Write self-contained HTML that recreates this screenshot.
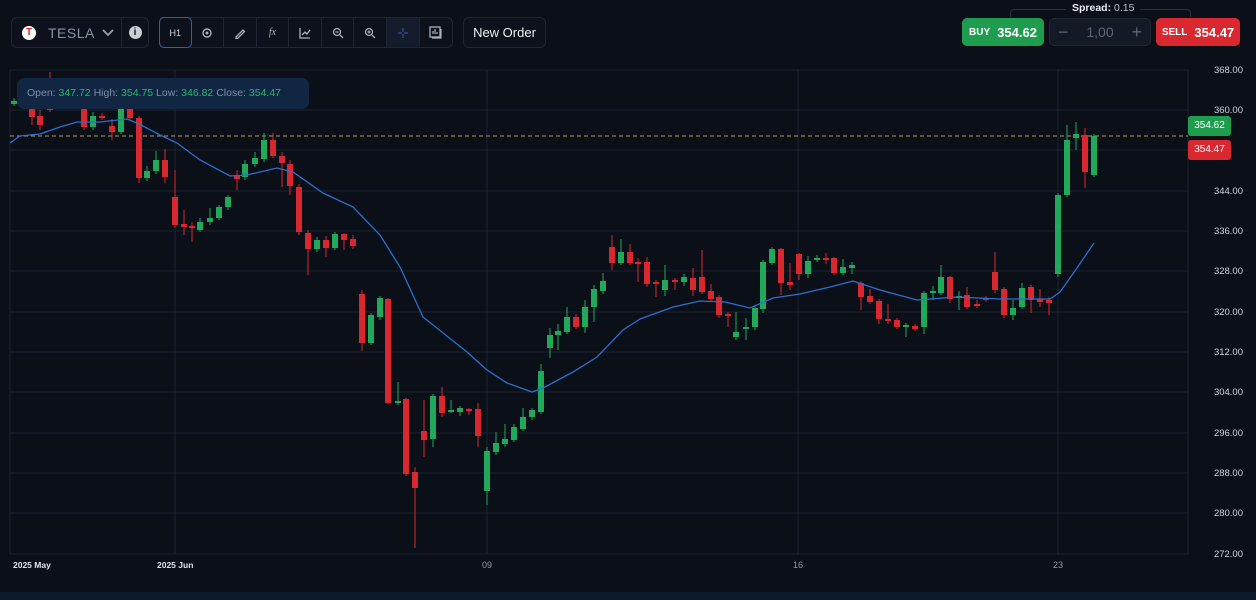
<!DOCTYPE html>
<html><head><meta charset="utf-8">
<style>
*{box-sizing:border-box;margin:0;padding:0}
body{width:1256px;height:600px;background:#0a0f18;font-family:"Liberation Sans",sans-serif;overflow:hidden;position:relative;color:#fff}
.grp{position:absolute;top:17px;height:31px;border:1px solid #1f2633;border-radius:6px;background:#0c111b;display:flex;align-items:center}
.btn{width:33px;height:29px;display:flex;align-items:center;justify-content:center;border-right:1px solid #1f2633}
.btn:last-child{border-right:none}
.lbl{position:absolute;right:13px;font-size:9.5px;color:#cfd5de}
.x{position:absolute;top:560px;font-size:9px;color:#8f98a6}
</style></head><body>

<div class="grp" style="left:11px;width:138px">
  <div style="width:110px;height:29px;display:flex;align-items:center;border-right:1px solid #1f2633">
    <div style="width:14px;height:14px;border-radius:50%;background:#fff;margin-left:10px;display:flex;align-items:center;justify-content:center;color:#e0242b;font-size:10px;font-weight:bold">T</div>
    <span style="margin-left:12px;font-size:14px;color:#8a93a2;letter-spacing:.5px">TESLA</span>
    <svg width="12" height="8" style="margin-left:7px"><path d="M1 1l5 5 5-5" stroke="#9aa2b0" stroke-width="1.8" fill="none"/></svg>
  </div>
  <div style="flex:1;display:flex;justify-content:center"><div style="width:13px;height:13px;border-radius:50%;background:#c9ced6;color:#0c111b;font-size:10px;font-weight:bold;text-align:center;line-height:13px">i</div></div>
</div>

<div class="grp" style="left:159px;width:294px">
  <div class="btn" style="border:1.5px solid #2a5fb8;border-radius:5px;height:31px;margin-left:-1px;font-size:9px;color:#cfd5de">H1</div>
  <div class="btn"><svg width="12" height="12"><circle cx="6" cy="6" r="4" stroke="#aab1bd" stroke-width="1.4" fill="none"/><circle cx="6" cy="6" r="1.5" fill="#aab1bd"/></svg></div>
  <div class="btn"><svg width="12" height="12"><path d="M2 10l7-7 1.5 1.5-7 7H2z" stroke="#aab1bd" stroke-width="1.3" fill="none"/></svg></div>
  <div class="btn" style="font-size:10px;font-style:italic;color:#aab1bd;font-family:'Liberation Serif',serif">fx</div>
  <div class="btn"><svg width="12" height="12"><path d="M1 1v10h10M3 8l3-3 2 2 3-4" stroke="#aab1bd" stroke-width="1.3" fill="none"/></svg></div>
  <div class="btn"><svg width="12" height="12"><circle cx="5" cy="5" r="3.5" stroke="#aab1bd" stroke-width="1.3" fill="none"/><path d="M8 8l3 3M3.5 5h3" stroke="#aab1bd" stroke-width="1.3"/></svg></div>
  <div class="btn"><svg width="12" height="12"><circle cx="5" cy="5" r="3.5" stroke="#aab1bd" stroke-width="1.3" fill="none"/><path d="M8 8l3 3M3.5 5h3M5 3.5v3" stroke="#aab1bd" stroke-width="1.3"/></svg></div>
  <div class="btn" style="background:#141b2b"><svg width="10" height="10"><path d="M5 0v4M5 6v4M0 5h4M6 5h4" stroke="#3c5fa8" stroke-width="1"/></svg></div>
  <div class="btn"><svg width="13" height="13"><rect x="1" y="1" width="10" height="10" stroke="#aab1bd" stroke-width="1.3" fill="none"/><path d="M4 8V5M6 8V3M8 8V6M3 12h9V3" stroke="#aab1bd" stroke-width="1.2" fill="none"/></svg></div>
</div>

<div class="grp" style="left:463px;width:83px;justify-content:center;font-size:13px;color:#eef1f5">New Order</div>

<div style="position:absolute;left:1010px;top:9px;width:181px;height:8px;border:1px solid #2a303c;border-bottom:none;border-radius:4px 4px 0 0"></div>
<div style="position:absolute;left:1066px;top:2px;padding:0 6px;background:#0a0f18;font-size:10.5px;color:#e8ecf1;font-weight:bold">Spread: <span style="font-weight:normal;color:#b8bec8">0.15</span></div>
<div style="position:absolute;left:962px;top:18px;width:82px;height:28px;background:#1f9d4f;border-radius:5px;display:flex;align-items:center;justify-content:center;font-weight:bold;font-size:13px"><span style="font-size:10px;margin-right:7px">BUY</span>354.62</div>
<div style="position:absolute;left:1049px;top:18px;width:102px;height:28px;background:#131925;border:1px solid #1f2633;border-radius:5px;display:flex;align-items:center;justify-content:space-between;padding:0 8px;color:#5d6574;font-size:14px"><span style="font-size:18px">−</span><span>1,00</span><span style="font-size:18px">+</span></div>
<div style="position:absolute;left:1156px;top:18px;width:84px;height:28px;background:#d92830;border-radius:5px;display:flex;align-items:center;justify-content:center;font-weight:bold;font-size:13px"><span style="font-size:10px;margin-right:7px">SELL</span>354.47</div>

<svg id="ch" width="1256" height="600" style="position:absolute;left:0;top:0"></svg>

<div style="position:absolute;left:17px;top:78px;width:292px;height:31px;background:#102643;border-radius:7px;font-size:10.5px;color:#7f8da3;padding:9px 0 0 10px">Open: <span style="color:#27b86a">347.72</span> High: <span style="color:#27b86a">354.75</span> Low: <span style="color:#27b86a">346.82</span> Close: <span style="color:#27b86a">354.47</span></div>

<div class="lbl" style="top:65px">368.00</div><div class="lbl" style="top:105px">360.00</div>
<div class="lbl" style="top:186px">344.00</div><div class="lbl" style="top:226px">336.00</div><div class="lbl" style="top:266px">328.00</div><div class="lbl" style="top:307px">320.00</div><div class="lbl" style="top:347px">312.00</div><div class="lbl" style="top:387px">304.00</div><div class="lbl" style="top:428px">296.00</div><div class="lbl" style="top:468px">288.00</div><div class="lbl" style="top:508px">280.00</div><div class="lbl" style="top:549px">272.00</div>
<div style="position:absolute;left:1188px;top:116px;width:43px;height:20px;background:#1f9d4f;border-radius:3px;font-size:10px;text-align:center;line-height:20px">354.62</div>
<div style="position:absolute;left:1188px;top:140px;width:43px;height:20px;background:#d92830;border-radius:3px;font-size:10px;text-align:center;line-height:20px">354.47</div>

<div class="x" style="left:13px;color:#dfe3ea;font-weight:bold;font-size:8.5px">2025 May</div>
<div class="x" style="left:157px;color:#dfe3ea;font-weight:bold;font-size:8.5px">2025 Jun</div>
<div class="x" style="left:482px">09</div><div class="x" style="left:793px">16</div><div class="x" style="left:1053px">23</div>
<div style="position:absolute;left:0;top:592px;width:1256px;height:8px;background:#0b1a2c"></div>

<script>
var s=document.getElementById('ch'),h='';
h+='<rect x="10" y="70" width="1178" height="484" fill="none" stroke="#1c2330"/>';
[110,150,191,231,271,312,352,392,433,473,513].forEach(function(y){h+='<line x1="10" x2="1188" y1="'+y+'" y2="'+y+'" stroke="#1c2330"/>'});
[175,487,798,1058].forEach(function(x){h+='<line y1="70" y2="554" x1="'+x+'" x2="'+x+'" stroke="#1c2330"/>'});
h+='<line x1="10" x2="1188" y1="136" y2="136" stroke="#b39a5c" stroke-dasharray="4 3"/>';
var G='#22a85a',R='#d9272f';
var c=[[14,101,104,98,106,G],[32,108,117,104,125,R],[40,116,125,110,130,R],[50,108,110,72,112,R],[84,108,127,104,130,R],[93,116,127,112,130,G],[102,116,118,113,120,R],[112,126,132,119,140,R],[121,108,132,104,134,G],[130,108,118,104,120,R],[139,118,178,116,183,R],[147,171,178,166,181,G],[156,160,171,151,174,G],[165,160,177,149,183,R],[175,197,225,170,228,R],[184,224,227,210,235,R],[192,226,228,222,242,R],[200,222,230,218,232,G],[210,218,222,208,225,G],[219,207,218,205,220,G],[228,197,207,195,210,G],[237,176,179,170,190,R],[245,164,177,160,180,G],[255,158,164,152,167,G],[264,140,159,133,162,G],[273,140,156,133,158,R],[282,156,163,152,187,R],[290,164,186,160,195,R],[299,187,232,184,235,R],[308,233,249,230,275,R],[317,240,249,237,252,G],[326,240,248,236,257,R],[335,234,248,232,250,G],[344,234,240,233,250,R],[353,239,246,235,249,R],
[362,294,343,290,351,R],[371,315,343,313,345,G],[380,298,317,296,320,G],[388,299,403,298,404,R],[398,401,403,382,405,G],[406,399,474,398,476,R],[415,472,488,467,548,R],[424,431,440,400,457,R],[433,396,439,394,447,G],[442,396,413,387,417,R],[451,410,412,400,413,G],[460,408,412,406,416,G],[469,409,410,408,415,R],[478,409,436,403,447,R],[487,451,491,447,505,G],[496,443,452,432,455,G],[505,439,444,424,447,G],[514,427,440,424,442,G],[523,417,429,408,431,G],[532,410,417,408,420,G],[541,371,412,364,414,G],[550,335,348,328,358,G],[558,331,335,324,350,G],[567,317,332,307,334,G],[576,317,327,314,329,R],[585,307,327,300,333,G],[594,289,307,285,322,G],[603,281,291,273,294,G],[612,247,263,235,270,R],[621,252,263,239,265,G],[630,252,263,244,265,R],[638,262,264,258,282,R],[647,262,284,257,287,R],[656,282,284,280,297,R],[665,280,290,265,296,G],[675,280,282,278,290,R],[684,277,282,274,286,G],[693,278,290,268,296,R],
[702,277,292,250,294,R],[711,291,299,284,302,R],[719,297,315,295,318,R],[728,314,316,312,327,R],[736,332,337,312,340,G],[746,327,329,318,340,G],[755,308,327,305,330,G],[763,262,309,260,313,G],[772,249,263,247,265,G],[781,249,283,248,295,R],[790,282,285,263,290,R],[799,254,274,253,280,R],[808,261,274,256,278,G],[817,258,260,255,262,G],[826,258,260,253,264,R],[834,258,273,257,275,R],[843,267,273,259,275,G],[852,265,268,262,274,G],[861,283,297,281,310,R],[870,296,302,289,304,R],[879,301,319,299,324,R],[888,319,321,304,324,R],[897,320,327,318,329,R],[906,325,327,323,337,G],[915,326,329,324,331,R],[924,293,327,291,334,G],[933,291,293,286,300,G],[941,277,293,265,295,G],[950,277,299,276,303,R],[959,296,298,291,310,G],[967,295,307,287,309,R],[977,304,306,300,308,R],[986,298,300,296,302,R],[995,272,290,252,293,R],[1004,289,315,287,318,R],[1013,308,315,300,320,G],[1022,288,307,283,309,G],[1031,287,300,285,313,R],[1040,299,302,289,307,R],[1049,300,303,297,315,R],[1058,195,274,193,277,G],[1067,140,195,125,197,G],[1076,134,138,122,150,G],[1085,135,172,128,188,R],[1094,136,175,134,177,G]];
c.forEach(function(d){h+='<line x1="'+d[0]+'" x2="'+d[0]+'" y1="'+d[3]+'" y2="'+d[4]+'" stroke="'+d[5]+'" stroke-width="1"/>';h+='<rect x="'+(d[0]-3)+'" y="'+d[1]+'" width="6" height="'+Math.max(2,d[2]-d[1])+'" fill="'+d[5]+'"/>'});
var m=[[10,143],[20,136],[40,134],[60,127],[77,122],[100,122],[127,119],[137,123],[160,135],[177,143],[200,160],[230,176],[247,175],[277,168],[293,172],[323,193],[353,207],[380,235],[400,267],[423,317],[467,352],[487,370],[507,383],[532,392],[543,388],[573,372],[597,357],[623,330],[640,319],[673,307],[700,301],[725,302],[750,308],[773,298],[800,294],[830,287],[853,281],[880,290],[917,300],[957,297],[1000,299],[1050,299],[1060,292],[1077,268],[1094,243]];
h+='<polyline fill="none" stroke="#2d6fd0" stroke-width="1.3" points="'+m.map(function(p){return p.join(',')}).join(' ')+'"/>';
s.innerHTML=h;
</script>
</body></html>
